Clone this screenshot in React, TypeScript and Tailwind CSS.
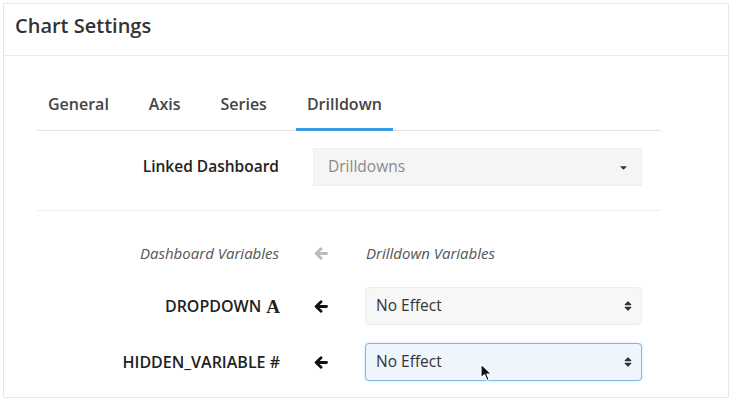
import React from 'react';
import { FaCaretDown, FaSort } from 'react-icons/fa';

const tabs = ['General', 'Axis', 'Series', 'Drilldown'];

const Cursor = () => (
  <svg width="13" height="19" viewBox="0 0 13 19" className="absolute left-[114px] top-[19px]">
    <path d="M1 1 L1 15 L4.5 11.8 L7 17.5 L9.2 16.5 L6.8 11 L11.5 11 Z" fill="#111" stroke="#fff" strokeWidth="1.2" strokeLinejoin="round" />
  </svg>
);

const Arrow = ({ color }: { color: string }) => (
  <svg width="14" height="13" viewBox="0 0 14 13" fill="none" stroke={color} strokeWidth="2.8" strokeLinecap="round" strokeLinejoin="round">
    <path d="M12.5 6.5 H2.5" />
    <path d="M7 1.8 L2.2 6.5 L7 11.2" />
  </svg>
);

export default function App() {
  return (
    <div className="w-[737px] h-[403px] bg-white pt-[3px] pl-[3px]" style={{ fontFamily: '"Open Sans", "Noto Sans", sans-serif' }}>
      <div className="w-[726px] h-[395px] border border-[#e6e6e6] flex flex-col">
        {/* header */}
        <div className="h-[52px] border-b border-[#ebebeb] pl-[11px] pt-[10px]">
          <h1 className="text-[20px] leading-[24px] font-semibold text-[#333]">Chart Settings</h1>
        </div>

        <div className="pl-[33px] pt-[36px] w-[657px]">
          {/* tabs */}
          <div className="flex gap-[18px] border-b border-[#e3e3e3]">
            {tabs.map((t) => (
              <div
                key={t}
                className={
                  t === 'Drilldown'
                    ? 'px-[11px] pb-[12px] text-[16px] leading-[24px] font-semibold text-[#444] border-b-[3px] border-[#3a9be3] -mb-px'
                    : 'px-[11px] pb-[12px] text-[16px] leading-[24px] font-semibold text-[#444] border-b-[3px] border-transparent -mb-px'
                }
              >
                {t}
              </div>
            ))}
          </div>

          {/* linked dashboard */}
          <div className="flex items-center mt-[17px] h-[38px]">
            <div className="w-[242px] text-right text-[15.5px] font-semibold text-[#222]">Linked Dashboard</div>
            <div className="ml-[34px] w-[329px] h-[38px] bg-[#f5f5f5] border border-[#eeeeee] flex items-center justify-between pl-[14px] pr-[12px]">
              <span className="text-[15.5px] text-[#8a8a8a]">Drilldowns</span>
              <FaCaretDown className="text-[#333] w-[11px] h-[11px]" />
            </div>
          </div>

          <div className="mt-[24px] h-px bg-[#efefef]" />

          {/* variables header */}
          <div className="flex items-center mt-[30px] h-[24px]">
            <div className="w-[242px] text-right text-[15px] italic text-[#555]">Dashboard Variables</div>
            <div className="w-[87px] pl-[35px] flex items-center">
              <Arrow color="#bbbbbb" />
            </div>
            <div className="text-[15px] italic text-[#555]">Drilldown Variables</div>
          </div>

          {/* dropdown row */}
          <div className="flex items-center mt-[22px] h-[38px]">
            <div className="w-[243px] flex items-center justify-end gap-[5px] text-[16px] font-semibold text-[#222]">
              DROPDOWN
              <span className="text-[19px] font-bold leading-none" style={{ fontFamily: '"Liberation Serif", serif' }}>A</span>
            </div>
            <div className="w-[85px] pl-[34px] flex items-center">
              <Arrow color="#111111" />
            </div>
            <div className="w-[277px] h-[38px] rounded-[4px] bg-[#f7f7f7] border border-[#eeeeee] flex items-center justify-between pl-[10px] pr-[8px]">
              <span className="text-[15.5px] text-[#333]">No Effect</span>
              <FaSort className="text-[#333] w-[10px] h-[12px]" />
            </div>
          </div>

          {/* hidden variable row */}
          <div className="flex items-center mt-[18px] h-[38px]">
            <div className="w-[243px] text-right text-[16px] font-semibold text-[#222]">HIDDEN_VARIABLE #</div>
            <div className="w-[85px] pl-[34px] flex items-center">
              <Arrow color="#111111" />
            </div>
            <div className="relative w-[277px] h-[38px] rounded-[4px] bg-[#eef5fc] border border-[#7cb8ea] shadow-[0_0_2px_rgba(102,175,233,0.5)] flex items-center justify-between pl-[10px] pr-[8px]">
              <span className="text-[15.5px] text-[#333]">No Effect</span>
              <FaSort className="text-[#333] w-[10px] h-[12px]" />
              <Cursor />
            </div>
          </div>
        </div>
      </div>
    </div>
  );
}
